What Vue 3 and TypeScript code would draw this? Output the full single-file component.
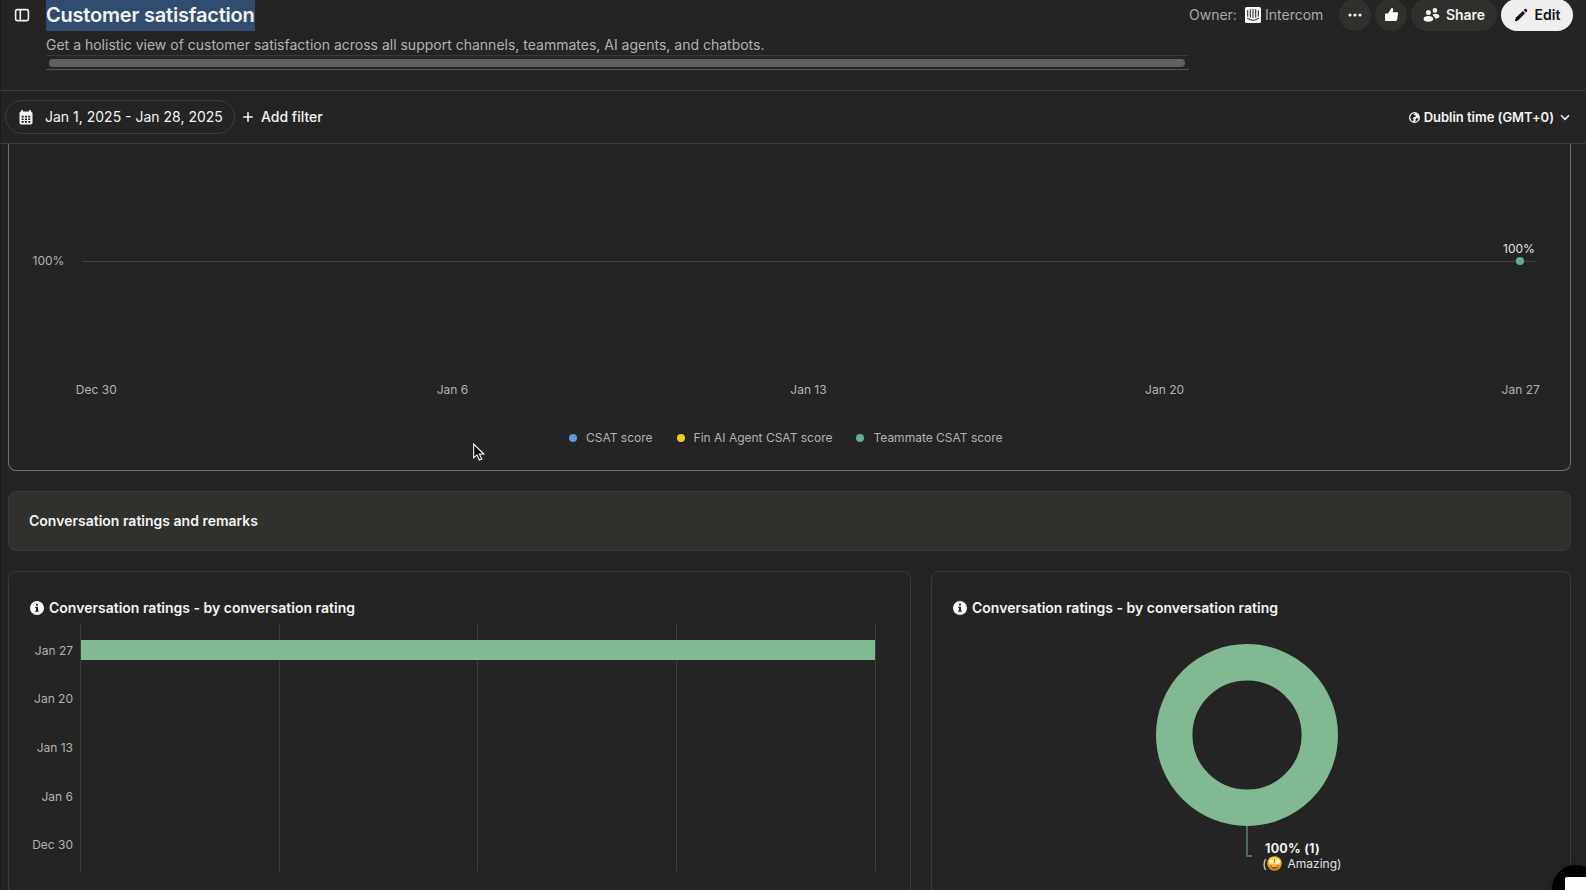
<script setup lang="ts">
interface Tick { label: string; pos: number }

const weeks: Tick[] = [
  { label: 'Dec 30', pos: 96.3 },
  { label: 'Jan 6', pos: 452.4 },
  { label: 'Jan 13', pos: 808.5 },
  { label: 'Jan 20', pos: 1164.6 },
  { label: 'Jan 27', pos: 1520.7 },
]

const legend = [
  { label: 'CSAT score', tone: 'blue' },
  { label: 'Fin AI Agent CSAT score', tone: 'yellow' },
  { label: 'Teammate CSAT score', tone: 'green' },
]

const barRows: Tick[] = [
  { label: 'Jan 27', pos: 655 },
  { label: 'Jan 20', pos: 703 },
  { label: 'Jan 13', pos: 752 },
  { label: 'Jan 6', pos: 801 },
  { label: 'Dec 30', pos: 849 },
]
const barGrid: number[] = [80.5, 279.5, 477.5, 676.5, 875.5]
const ratingTitle = 'Conversation ratings - by conversation rating'
</script>

<template>
  <div class="app">
    <header class="header">
      <svg class="panel-icon" width="16" height="14" viewBox="0 0 16 14" fill="none" stroke="#f2f2f2" stroke-width="1.6">
        <rect x="1.6" y="1.6" width="12.8" height="11" rx="1.6" />
        <path d="M6.3 1.6v11" />
      </svg>
      <div class="heading">
        <h1><span>Customer satisfaction</span></h1>
        <p class="subtitle">Get a holistic view of customer satisfaction across all support channels, teammates, AI agents, and chatbots.</p>
        <div class="scroll"><div class="thumb"></div></div>
      </div>
      <div class="owner">
        <span class="owner-label">Owner:</span>
        <svg width="16" height="16" viewBox="0 0 16 16" fill="none">
          <rect width="16" height="16" rx="1.6" fill="#fff" />
          <path d="M2.7 3.6v5.6M5.3 2.6v7.6M8 2.3v8.2M10.7 2.6v7.6M13.3 3.6v5.6M2.7 11.4c2.8 2.5 7.8 2.5 10.6 0" stroke="#2b2b2b" stroke-width="1.1" stroke-linecap="round" />
        </svg>
        <span class="owner-name">Intercom</span>
      </div>
      <div class="actions">
        <button class="btn round" aria-label="More">
          <svg width="16" height="16" viewBox="0 0 16 16" fill="#f4f4f4"><circle cx="3" cy="8" r="1.6" /><circle cx="8" cy="8" r="1.6" /><circle cx="13" cy="8" r="1.6" /></svg>
        </button>
        <button class="btn round" aria-label="Like">
          <svg width="16" height="16" viewBox="0 0 16 16" fill="#fff"><path d="M2 7.2q0-.7.7-.7H5L8.4 1.3q.3-.5.9-.3 1 .3.9 1.4L9.7 5.3H14q1.3 0 1.1 1.3l-.9 5.7q-.2 1.7-1.8 1.7H2.7q-.7 0-.7-.7z" /></svg>
        </button>
        <button class="btn share">
          <svg width="17" height="16" viewBox="0 0 17 16" fill="#f4f4f4">
            <circle cx="5.4" cy="5.6" r="2.5" /><path d="M.6 12c0-2 2-2.9 4.8-2.9s4.8.9 4.8 2.9-2 2.7-4.8 2.7S.6 14 .6 12z" />
            <circle cx="11.9" cy="3.4" r="2.3" /><path d="M9.4 8q1-1.3 3-1.3c2.4 0 4 .9 4 2.5s-1.7 2.3-4.2 2.2q-.7-2.3-2.8-3.4z" />
          </svg>
          <span>Share</span>
        </button>
        <button class="btn edit">
          <svg width="14" height="14" viewBox="0 0 14 14" fill="#111"><path d="M.8 13.2l.8-3.2 7.2-7.1 2.4 2.4-7.2 7.1z" /><path d="M9.6 2.1l.9-.9q.9-.8 1.8 0l.6.6q.8.9 0 1.8l-.9.9z" /></svg>
          <span>Edit</span>
        </button>
      </div>
    </header>

    <div class="filters">
      <button class="date">
        <svg width="14" height="15" viewBox="0 0 14 15">
          <path d="M2.2 0h1.6v1.5h6.4V0h1.6v1.5q1.7 0 1.7 1.7v9.6q0 1.7-1.7 1.7H2.2Q.5 14.5.5 12.8V3.2Q.5 1.5 2.2 1.5z" fill="#f4f4f4" />
          <path d="M2.6 5.7h2.1v1.7H2.6zM5.9 5.7H8v1.7H5.9zM9.2 5.7h2.1v1.7H9.2zM2.6 8.4h2.1v1.7H2.6zM5.9 8.4H8v1.7H5.9zM9.2 8.4h2.1v1.7H9.2zM2.6 11.1h2.1v1.7H2.6zM5.9 11.1H8v1.7H5.9zM9.2 11.1h2.1v1.7H9.2z" fill="#242424" />
        </svg>
        <span>Jan 1, 2025 - Jan 28, 2025</span>
      </button>
      <button class="add">
        <svg width="10" height="10" viewBox="0 0 10 10" stroke="#f4f4f4" stroke-width="1.6"><path d="M5 .2v9.6M.2 5h9.6" /></svg>
        <span>Add filter</span>
      </button>
      <button class="zone">
        <svg width="11" height="11" viewBox="0 0 11 11"><circle cx="5.5" cy="5.5" r="4.8" fill="none" stroke="#f4f4f4" stroke-width="1.3" /><path d="M4.4 2.6L6.6.8l3 1.7.7 3-1.5 1-1.2-.6-1.1 1.5.2 1.4-1.6 1.6-1.2-.8.9-2.2-1.1-1.1 1.5-1.3 1.4-.3.1-1.1z" fill="#f4f4f4" /></svg>
        <span>Dublin time (GMT+0)</span>
        <svg class="chev" width="10" height="7" viewBox="0 0 10 7" fill="none" stroke="#f4f4f4" stroke-width="1.6"><path d="M1 1.3l4 4 4-4" /></svg>
      </button>
    </div>

    <main class="content">
      <section class="trend">
        <svg class="plot" width="1561" height="278" viewBox="9 144 1561 278">
          <path d="M82 261.5H1535" stroke="#414141" />
          <text class="tick" x="32.5" y="265">100%</text>
          <text class="tick bright" x="1519" y="252.7" text-anchor="middle">100%</text>
          <circle cx="1520" cy="261" r="4.1" fill="#5eaf8c" />
          <text v-for="w in weeks" :key="w.label" class="tick" :x="w.pos" y="394" text-anchor="middle">{{ w.label }}</text>
        </svg>
        <div class="legend">
          <div v-for="item in legend" :key="item.label" class="legend-item">
            <i :class="['dot', item.tone]"></i><span>{{ item.label }}</span>
          </div>
        </div>
      </section>

      <section class="section-title">Conversation ratings and remarks</section>

      <div class="grid">
        <section class="card">
          <h2>
            <svg width="14" height="14" viewBox="0 0 14 14"><circle cx="7" cy="7" r="7" fill="#fafafa" /><path d="M6 2.8h2v1.7H6zM5.2 5.7H8v3.8h.8v1.3H5.2V9.5H6V7h-.8z" fill="#242424" /></svg>
            <span>{{ ratingTitle }}</span>
          </h2>
          <svg class="plot" width="901" height="266" viewBox="9 624 901 266">
            <path v-for="x in barGrid" :key="x" :d="`M${x} 624V871`" stroke="#3d3d3d" />
            <rect x="81" y="640" width="794" height="20" fill="#81b992" />
            <text v-for="r in barRows" :key="r.label" class="tick" x="73" :y="r.pos" text-anchor="end">{{ r.label }}</text>
          </svg>
        </section>
        <section class="card">
          <h2>
            <svg width="14" height="14" viewBox="0 0 14 14"><circle cx="7" cy="7" r="7" fill="#fafafa" /><path d="M6 2.8h2v1.7H6zM5.2 5.7H8v3.8h.8v1.3H5.2V9.5H6V7h-.8z" fill="#242424" /></svg>
            <span>{{ ratingTitle }}</span>
          </h2>
          <svg class="plot" width="638" height="266" viewBox="932 624 638 266">
            <defs>
              <radialGradient id="face" cx=".5" cy=".3" r=".75"><stop offset="0" stop-color="#ffe468" /><stop offset=".55" stop-color="#f5af26" /><stop offset="1" stop-color="#cf7410" /></radialGradient>
            </defs>
            <circle cx="1247" cy="735" r="72.8" fill="none" stroke="#81b992" stroke-width="36.4" />
            <path d="M1247 826v30h5" fill="none" stroke="#628a70" stroke-width="1.4" />
            <text class="slice" x="1265" y="853">100% (1)</text>
            <text class="tick bright" x="1262.2" y="868">(</text>
            <circle cx="1274.5" cy="863.5" r="7.3" fill="url(#face)" />
            <path d="M1271.3 858.2l1 2.1 2.2.4-1.6 1.6.4 2.3-2-1.1-2.1 1 .4-2.2-1.6-1.7 2.3-.3zM1277.8 858.2l1 2.1 2.2.3-1.6 1.7.4 2.2-2-1-2.1 1.1.4-2.3-1.6-1.6 2.2-.4z" fill="#fff6c4" />
            <path d="M1274.5 859.4v2.8" stroke="#b76a16" stroke-width="1" />
            <path d="M1270.2 865.2q4.3 1.5 8.6 0-.8 3.5-4.3 3.5t-4.3-3.5z" fill="#8a4a14" />
            <path d="M1271.4 866q3.1.8 6.2 0l-.3.7q-2.8.5-5.6 0z" fill="#ffe9c0" />
            <text class="tick bright" x="1287.5" y="868">Amazing)</text>
          </svg>
        </section>
      </div>
    </main>

    <svg class="cursor" width="14" height="21" viewBox="0 0 14 21"><path d="M1.7 2v13.8l3.3-3 2.3 5.2 2.4-1.1-2.3-4.9h4.4z" fill="#050505" stroke="#fff" stroke-width="1.1" /></svg>
    <div class="launcher"><div class="launcher-mark"></div></div>
  </div>
</template>

<style>
body { background: #242424; overflow: hidden; }
</style>

<style scoped>
.app { position: relative; box-sizing: border-box; width: 1586px; height: 890px; overflow: hidden; background: #242424; color: #f4f4f4; font: 14px/20px Inter, sans-serif; display: flex; flex-direction: column; box-shadow: inset 1px 0 #1c1c1c; }
button { font: inherit; color: inherit; border: 0; background: none; padding: 0; display: flex; align-items: center; }
svg { display: block; flex: none; }
.header { height: 90px; flex: none; border-bottom: 1px solid #3d3d3d; display: flex; align-items: flex-start; padding: 0 13px 0 14px; }
.panel-icon { margin: 8px 16px 0 0; }
.heading { width: 1143px; flex: none; }
h1 { margin: 0; height: 31px; font-size: 20px; line-height: 31px; font-weight: 600; letter-spacing: -.2px; }
h1 span { display: inline-block; height: 31px; background: #314c6e; }
.subtitle { margin: 4px 0 0; height: 20px; color: #b3b3b1; white-space: nowrap; }
.scroll { box-sizing: border-box; height: 15px; border-top: 1px solid #3a3a3a; border-bottom: 1px solid #555; padding: 3px 4px 0 3px; }
.thumb { height: 8px; border-radius: 4px; background: #606060; }
.owner { display: flex; align-items: center; height: 30px; flex: 1; color: #a9a9a7; white-space: nowrap; }
.owner-label { width: 56px; }
.owner-name { margin-left: 4px; }
.actions { display: flex; gap: 4px; margin-top: -1px; }
.btn { height: 32px; border-radius: 16px; background: #30302c; justify-content: center; font-weight: 600; }
.round { width: 32px; }
.share { width: 86px; gap: 6px; }
.edit { width: 72px; gap: 7px; background: #efefef; color: #111; }
.filters { height: 52px; flex: none; border-bottom: 1px solid #3d3d3d; display: flex; align-items: center; padding: 0 16px 0 5px; }
.date { box-sizing: border-box; width: 230px; height: 34px; border: 1px solid #3d3d3b; border-radius: 17px; padding-left: 12.5px; gap: 12.5px; white-space: nowrap; }
.add { margin-left: 8px; gap: 8px; font-weight: 500; }
.zone { margin-left: auto; gap: 4px; font-size: 13px; font-weight: 600; }
.zone span { letter-spacing: -.02px; }
.chev { margin-left: 2px; }
.content { padding: 0 15px 0 8px; flex: 1; min-height: 0; }
.trend { box-sizing: border-box; height: 327px; border: 1px solid #71716f; border-top: 0; border-radius: 0 0 8px 8px; }
.legend { display: flex; padding-left: 560px; height: 32px; align-items: center; gap: 24px; font-size: 12px; color: #b3b3b1; }
.legend-item { display: flex; align-items: center; gap: 9px; }
.dot { width: 8px; height: 8px; border-radius: 50%; }
.blue { background: #5f99da; }
.yellow { background: #f1cb1f; }
.green { background: #5eaf8c; }
.section-title { box-sizing: border-box; margin-top: 20px; height: 60px; line-height: 58px; padding-left: 20px; border: 1px solid #3a3a38; border-radius: 8px; background: #30302c; font-weight: 600; }
.grid { display: grid; grid-template-columns: 903px 640px; gap: 20px; margin-top: 20px; }
.card { box-sizing: border-box; height: 360px; border: 1px solid #3a3a3a; border-radius: 8px; }
h2 { margin: 0; height: 52px; box-sizing: border-box; padding: 20px 0 0 21px; display: flex; align-items: center; gap: 5px; font-size: 14px; line-height: 20px; font-weight: 600; }
.tick { font-size: 12px; fill: #b3b3b1; }
.bright { fill: #e2e2e2; }
.slice { font-size: 12.5px; font-weight: 700; fill: #f0f0f0; letter-spacing: .25px; }
.cursor { position: absolute; left: 472px; top: 442px; }
.launcher { position: absolute; left: 1552px; top: 865px; width: 48px; height: 48px; border-radius: 50%; background: #000; box-shadow: 0 1px 8px rgba(0, 0, 0, .25); }
.launcher-mark { margin: 12px 0 0 13px; width: 24px; height: 26px; border-radius: 2px; background: #fff; }
</style>
